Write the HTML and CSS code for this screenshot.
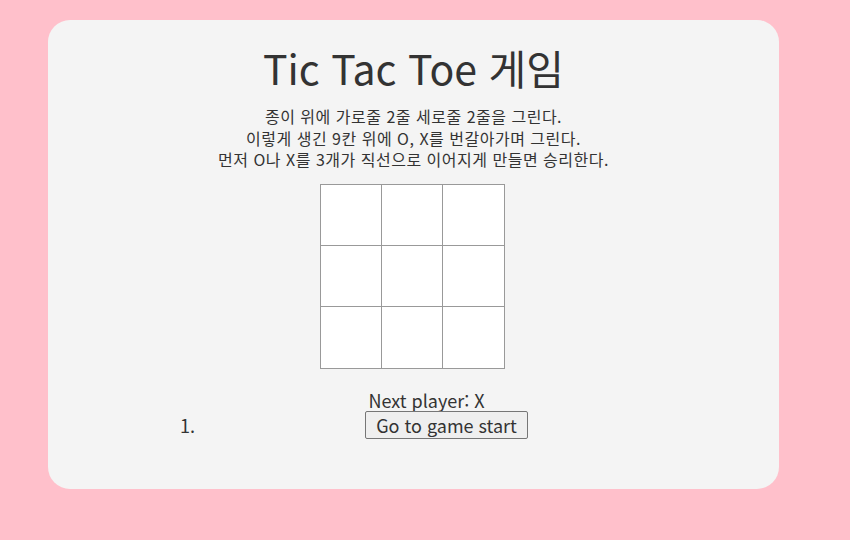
FILE: index.html
```html
<!DOCTYPE html>
<html lang="ko">
<head>
<meta charset="utf-8">
<title>Tic Tac Toe</title>
<link rel="stylesheet" href="styles.css">
</head>
<body>
<main class="card">
  <h1 class="title">Tic Tac Toe 게임</h1>
  <p class="desc">종이 위에 가로줄 2줄 세로줄 2줄을 그린다.<br>이렇게 생긴 9칸 위에 O, X를 번갈아가며 그린다.<br>먼저 O나 X를 3개가 직선으로 이어지게 만들면 승리한다.</p>
  <div class="game">
    <div class="board">
      <button class="square"></button><button class="square"></button><button class="square"></button>
      <button class="square"></button><button class="square"></button><button class="square"></button>
      <button class="square"></button><button class="square"></button><button class="square"></button>
    </div>
    <div class="game-info">
      <div class="status">Next player: X</div>
      <ol class="moves">
        <li><button class="move">Go to game start</button></li>
      </ol>
    </div>
  </div>
</main>
</body>
</html>
```
FILE: styles.css
```css
html, body {
  margin: 0;
  padding: 0;
  background: #ffc0cb;
}
body {
  font-family: "Noto Sans CJK KR", "Noto Sans", sans-serif;
  color: #333;
  padding: 20px 71px 51px 48px;
}
.card {
  background: #f4f4f4;
  border-radius: 22px;
  height: 469px;
  box-sizing: border-box;
  padding-top: 22px;
  text-align: center;
}
.title {
  margin: 0;
  font-size: 41px;
  font-weight: 400;
  line-height: 50px;
}
.desc {
  margin: 14px 0 0;
  font-size: 16px;
  line-height: 21.5px;
  letter-spacing: 0.5px;
}
.game {
  margin-top: 13px;
}
.board {
  display: grid;
  grid-template-columns: 61px 61px 62px;
  grid-template-rows: 61px 61px 62px;
  width: 184px;
  margin: 0 0 0 272px;
}
.square {
  width: calc(100% + 1px);
  height: calc(100% + 1px);
  margin: 0;
  padding: 0;
  border: 1px solid #999;
  background: #fff;
  box-sizing: border-box;
}
.game-info {
  width: 533px;
  margin: 21px 0 0 112px;
}
.status {
  font-size: 18px;
  line-height: 22px;
}
.moves {
  margin: 0;
  padding-left: 40px;
  font-size: 18px;
}
.move {
  font-family: inherit;
  font-size: 18px;
  color: #333;
  padding: 0 10px;
  height: 28px;
  line-height: 24px;
  border: 1px solid #767676;
  border-radius: 2px;
  background: #efefef;
}
```
